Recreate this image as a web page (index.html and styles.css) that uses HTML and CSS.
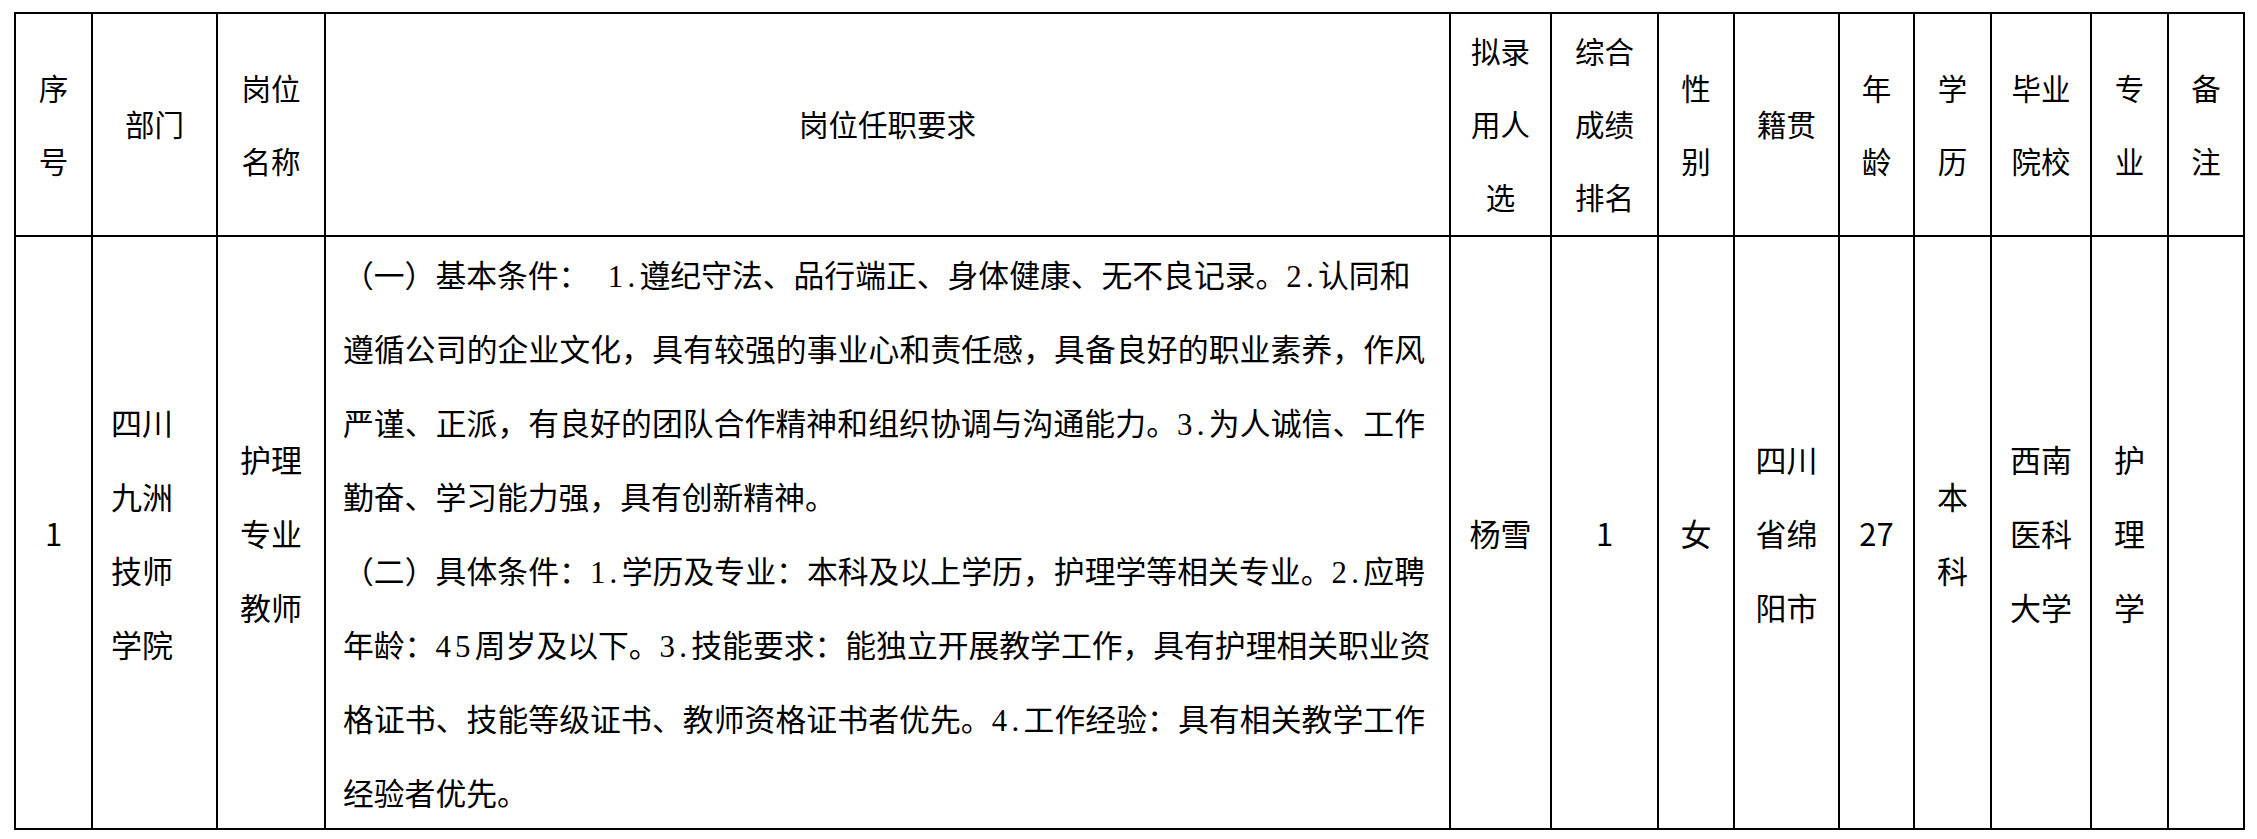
FILE: index.html
```html
<!DOCTYPE html>
<html lang="zh-CN">
<head>
<meta charset="utf-8">
<title>拟录用人选公示</title>
<link rel="stylesheet" href="styles.css">
</head>
<body>
<div class="page">
  <div class="grid">
    <div class="cell head">序<br>号</div>
    <div class="cell head">部门</div>
    <div class="cell head">岗位<br>名称</div>
    <div class="cell head">岗位任职要求</div>
    <div class="cell head">拟录<br>用人<br>选</div>
    <div class="cell head">综合<br>成绩<br>排名</div>
    <div class="cell head">性<br>别</div>
    <div class="cell head">籍贯</div>
    <div class="cell head">年<br>龄</div>
    <div class="cell head">学<br>历</div>
    <div class="cell head">毕业<br>院校</div>
    <div class="cell head">专<br>业</div>
    <div class="cell head">备<br>注</div>

    <div class="cell data">1</div>
    <div class="cell data left">四川<br>九洲<br>技师<br>学院</div>
    <div class="cell data">护理<br>专业<br>教师</div>
    <div class="cell desc">
      <div class="line">（一）基本条件：<span class="sp"> </span><span class="num">1.</span>遵纪守法、品行端正、身体健康、无不良记录。<span class="num">2.</span>认同和</div>
      <div class="line full">遵循公司的企业文化，具有较强的事业心和责任感，具备良好的职业素养，作风</div>
      <div class="line full">严谨、正派，有良好的团队合作精神和组织协调与沟通能力。<span class="num">3.</span>为人诚信、工作</div>
      <div class="line">勤奋、学习能力强，具有创新精神。</div>
      <div class="line full">（二）具体条件：<span class="num">1.</span>学历及专业：本科及以上学历，护理学等相关专业。<span class="num">2.</span>应聘</div>
      <div class="line full">年龄：<span class="num">45</span>周岁及以下。<span class="num">3.</span>技能要求：能独立开展教学工作，具有护理相关职业资</div>
      <div class="line full">格证书、技能等级证书、教师资格证书者优先。<span class="num">4.</span>工作经验：具有相关教学工作</div>
      <div class="line">经验者优先。</div>
    </div>
    <div class="cell data">杨雪</div>
    <div class="cell data">1</div>
    <div class="cell data">女</div>
    <div class="cell data">四川<br>省绵<br>阳市</div>
    <div class="cell data">27</div>
    <div class="cell data">本<br>科</div>
    <div class="cell data">西南<br>医科<br>大学</div>
    <div class="cell data">护<br>理<br>学</div>
    <div class="cell data"></div>
  </div>
</div>
</body>
</html>
```
FILE: styles.css
```css
html, body {
  margin: 0;
  padding: 0;
  background: #ffffff;
}

.page {
  padding: 12px 0 0 14px;
}

.grid {
  display: grid;
  grid-template-columns: 77px 125px 108px 1125px 101px 107px 76px 105px 75px 77px 100px 77px 76px;
  grid-template-rows: 223px 593px;
  width: max-content;
  border-left: 2px solid #000;
  border-top: 2px solid #000;
  color: #000;
}

.cell {
  box-sizing: border-box;
  border-right: 2px solid #000;
  border-bottom: 2px solid #000;
  display: flex;
  align-items: center;
  justify-content: center;
  text-align: center;
}

.head {
  font-family: "Noto Sans CJK SC", sans-serif;
  font-size: 29.5px;
  line-height: 73px;
  padding-bottom: 2px;
}

.data {
  font-family: "Noto Sans CJK SC", sans-serif;
  font-size: 31px;
  line-height: 74px;
}

.data.left {
  justify-content: flex-start;
  text-align: left;
  padding-left: 18px;
}

.desc {
  display: block;
  text-align: left;
  padding: 0 24px 0 17px;
  font-family: "Noto Sans CJK SC", sans-serif;
  font-size: 30.8px;
  line-height: 74px;
  white-space: nowrap;
}

.line {
  height: 74px;
  text-align: left;
}

.line.full {
  text-align: justify;
  text-align-last: justify;
}

.num {
  font-family: "Liberation Serif", serif;
  letter-spacing: 0.14em;
}

.sp {
  display: inline-block;
  width: 0.6em;
}
```
